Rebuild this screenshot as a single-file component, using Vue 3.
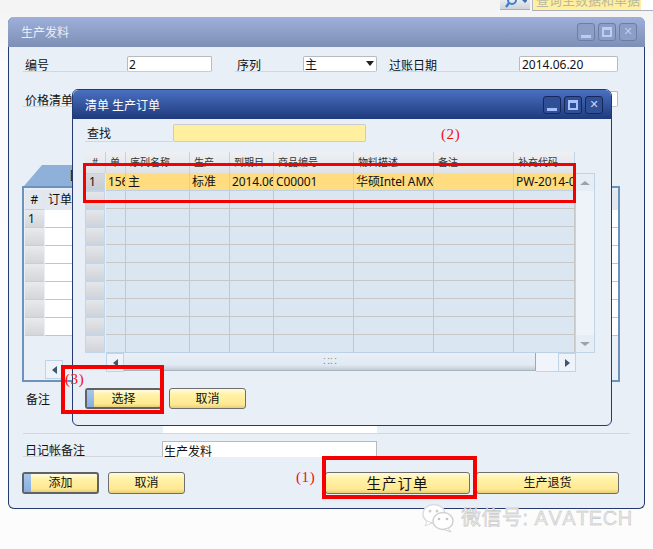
<script setup>
const dialogCols = [
  { w: 20, h: '单', c: '156' },
  { w: 64, h: '序列名称', c: '主' },
  { w: 40, h: '生产', c: '标准' },
  { w: 44, h: '到期日', c: '2014.06' },
  { w: 80, h: '商品编号', c: 'C00001' },
  { w: 80, h: '物料描述', c: '华硕Intel AMX' },
  { w: 80, h: '备注', c: '' },
  { w: 61, h: '补充代码', c: 'PW-2014-06' }
]
const dialogRows = Array.from({ length: 10 }, (_, i) => i)
const orderRows = Array.from({ length: 7 }, (_, i) => i)
</script>

<template>
  <div class="page">
    <div class="topbar">
      <div class="search-btn">
        <svg width="22" height="10" viewBox="0 0 22 10">
          <circle cx="7" cy="0" r="4" fill="none" stroke="#3f7fd0" stroke-width="2" />
          <path d="M4 3 L1 7" stroke="#3f7fd0" stroke-width="2.4" />
          <path d="M17 0 h6 l-3 3 z" fill="#3f6fa8" />
        </svg>
      </div>
      <div class="search-input"><span class="search-text">查询主数据和单据</span></div>
    </div>

    <section class="window main-window">
      <header class="title inactive">
        <span>生产发料</span>
        <div class="controls">
          <i class="ctl"><b class="min"></b></i>
          <i class="ctl"><b class="max"></b></i>
          <i class="ctl"><b class="close">✕</b></i>
        </div>
      </header>

      <div class="main-body">
        <div class="row row-one">
          <label class="lbl l-no">编号</label>
          <div class="field f-no">2</div>
          <label class="lbl l-series">序列</label>
          <div class="field f-series">主<span class="caret"></span></div>
          <label class="lbl l-date">过账日期</label>
          <div class="field f-date">2014.06.20</div>
        </div>
        <div class="row row-two">
          <label class="lbl l-price">价格清单</label>
          <div class="field f-price"></div>
        </div>

        <div class="tab"><span class="tab-text">[</span></div>
        <div class="frame">
          <div class="o-row o-head">
            <div class="o-num">#</div>
            <div class="o-cell o-headcell">订单</div>
          </div>
          <div v-for="r in orderRows" :key="r" class="o-row">
            <div class="o-num grey">{{ r === 0 ? '1' : '' }}</div>
            <div class="o-cell"></div>
          </div>
          <div class="o-scroll">
            <div class="arrow-btn"><span class="tri-left"></span></div>
          </div>
        </div>

        <div class="remark">
          <label>备注</label>
          <div class="remark-box"></div>
        </div>
        <div class="row row-journal">
          <label class="lbl l-journal">日记帐备注</label>
          <div class="field f-journal">生产发料</div>
        </div>
        <div class="actions">
          <button class="btn primary w-std"><i class="strip"></i>添加</button>
          <button class="btn w-std">取消</button>
          <button class="btn big">生产订单</button>
          <button class="btn wide">生产退货</button>
        </div>
      </div>
    </section>

    <section class="window dialog">
      <header class="title active">
        <span>清单 生产订单</span>
        <div class="controls dark">
          <i class="ctl"><b class="min"></b></i>
          <i class="ctl"><b class="max"></b></i>
          <i class="ctl"><b class="close">✕</b></i>
        </div>
      </header>
      <div class="dlg-body">
        <div class="find">
          <label>查找</label>
          <div class="find-input"></div>
        </div>
        <div class="grid-wrap">
          <div class="grid">
            <div class="g-row g-head">
              <div class="g-num">#</div>
              <div v-for="c in dialogCols" :key="c.h" class="g-hcell" :style="{ width: c.w + 'px' }">{{ c.h }}</div>
            </div>
            <div v-for="r in dialogRows" :key="r" class="g-row g-body" :class="{ selected: r === 0 }">
              <div class="g-num grey" :class="{ current: r === 0 }">{{ r === 0 ? '1' : '' }}</div>
              <div v-for="c in dialogCols" :key="c.h" class="g-cell" :style="{ width: c.w + 'px' }">{{ r === 0 ? c.c : '' }}</div>
            </div>
          </div>
          <div class="vscroll">
            <div class="v-btn"><span class="tri-up"></span></div>
            <div class="v-track"></div>
            <div class="v-btn"><span class="tri-down"></span></div>
          </div>
        </div>
        <div class="hscroll">
          <div class="arrow-btn"><span class="tri-left"></span></div>
          <div class="thumb"><span class="grip">∷∷</span></div>
          <div class="h-gap"></div>
          <div class="arrow-btn"><span class="tri-right"></span></div>
        </div>
        <div class="dlg-actions">
          <button class="btn primary w-std"><i class="strip"></i>选择</button>
          <button class="btn w-std">取消</button>
        </div>
      </div>
    </section>

    <div class="mark m-row"></div>
    <div class="mark m-select"></div>
    <div class="mark m-order"></div>
    <span class="note n1">(1)</span>
    <span class="note n2">(2)</span>
    <span class="note n3">(3)</span>

    <div class="watermark">
      <svg width="34" height="30" viewBox="0 0 34 30">
        <ellipse cx="12" cy="11" rx="11" ry="9.5" fill="#fff" stroke="#dcdcdc" stroke-width="1.4" />
        <path d="M5 18 L3 23 L10 20 Z" fill="#fff" stroke="#dcdcdc" />
        <ellipse cx="21" cy="18" rx="10" ry="8.5" fill="#fff" stroke="#d0d0d0" stroke-width="1.4" />
        <path d="M26 25 L29 29 L22 26.5 Z" fill="#fff" stroke="#d0d0d0" />
        <circle cx="8" cy="8" r="1.5" fill="#cfcfcf" />
        <circle cx="15" cy="8" r="1.5" fill="#cfcfcf" />
        <circle cx="17" cy="16" r="1.3" fill="#c4c4c4" />
        <circle cx="25" cy="16" r="1.3" fill="#c4c4c4" />
      </svg>
      <span class="wm-text">微信号: AVATECH</span>
    </div>
  </div>
</template>

<style scoped>
.page {
  position: relative;
  width: 653px;
  height: 549px;
  overflow: hidden;
  background: linear-gradient(#f3f3f3, #fbfbfb 12%, #fcfcfc);
  font-family: "Noto Sans", "Noto Sans CJK SC", sans-serif;
  font-size: 12px;
  color: #111;
}
.topbar {
  position: absolute;
  top: 0;
  left: 500px;
  right: 0;
  height: 11px;
  display: flex;
  gap: 2px;
}
.search-btn {
  width: 30px;
  height: 10px;
  padding-left: 5px;
  box-sizing: border-box;
  background: linear-gradient(#e8ebef, #cfd3d8);
  border-bottom: 1px solid #a9afb8;
  overflow: hidden;
}
.search-btn svg { display: block; }
.search-input {
  flex: 1;
  height: 10px;
  background: linear-gradient(90deg, #ffef9f 0, #ffef9f 108px, #fff 108px);
  border-left: 1px solid #b5b9c2;
  border-bottom: 1px solid #a9afb8;
  overflow: hidden;
  color: #b9b9a0;
  font-size: 13px;
  line-height: 10px;
  padding-left: 3px;
}
.search-text { position: relative; top: -5px; }

.window {
  position: absolute;
  box-sizing: border-box;
  background: #e8eff7;
  border-radius: 6px 7px 6px 6px;
}
.main-window {
  left: 8px;
  top: 17px;
  width: 637px;
  height: 492px;
  border: 1px solid #24396f;
  border-top: 0;
}
.dialog {
  left: 72px;
  top: 89px;
  width: 540px;
  height: 337px;
  border: 1px solid #24396f;
}
.title {
  height: 30px;
  display: flex;
  align-items: center;
  justify-content: space-between;
  border-radius: 6px 6px 0 0;
  color: #fff;
  padding-left: 12px;
}
.title.inactive {
  background: linear-gradient(#9eb0da, #7d8fb4);
  color: #e8edf7;
  margin: 0 -1px;
  padding-left: 13px;
}
.title.active {
  background: linear-gradient(#4a70c0, #1f3a7c);
  margin: 0;
  height: 29px;
  padding-left: 12px;
}
.controls {
  display: flex;
  gap: 3px;
  margin-right: 8px;
}
.ctl {
  position: relative;
  display: block;
  width: 18px;
  height: 18px;
  box-sizing: border-box;
  border: 1px solid #6c7ea6;
  border-radius: 3px;
  background: #8c9dc6;
}
.dark .ctl { border-color: #16275a; background: #2f4f97; }
.ctl b { position: absolute; display: block; font-weight: 700; }
.min { left: 3px; right: 3px; bottom: 2px; height: 3px; background: #bccdf2; }
.max { left: 3px; right: 3px; top: 3px; bottom: 3px; border: 2px solid #bccdf2; border-top-width: 3px; box-sizing: border-box; }
.close { inset: 0; text-align: center; line-height: 16px; font-size: 11px; color: #bccdf2; font-family: "DejaVu Sans", sans-serif; }
.dark .min, .dark .max { border-color: #a7c1ff; }
.dark .min { background: #a7c1ff; }
.dark .close { color: #c5d6ff; }

.main-body { padding: 9px 0 0 14px; }
.row { display: flex; align-items: flex-end; }
.lbl {
  display: block;
  height: 16px;
  line-height: 19px;
  box-sizing: border-box;
  border-bottom: 1px solid #d3d7dc;
  padding-left: 2px;
  white-space: nowrap;
}
.field {
  position: relative;
  height: 16px;
  box-sizing: border-box;
  background: #fff;
  border: 1px solid #b8babd;
  border-bottom: 1px solid #c9cbce;
  border-radius: 2px;
  line-height: 16px;
  padding-left: 1px;
  white-space: nowrap;
  overflow: hidden;
}
.row-one { height: 16px; }
.l-no { width: 104px; }
.f-no { width: 85px; }
.l-series { width: 68px; margin-left: 23px; }
.f-series { width: 74px; }
.caret {
  position: absolute;
  right: 2px;
  top: 4px;
  border: 4px solid transparent;
  border-top: 5px solid #222;
  border-bottom: 0;
}
.l-date { width: 132px; margin-left: 10px; }
.f-date { width: 99px; padding-left: 2px; }
.row-two { height: 16px; margin-top: 19px; }
.l-price { width: 60px; overflow: visible; }
.f-price { width: 99px; margin-left: 436px; }

.tab {
  width: 60px;
  height: 21px;
  margin: 58px 0 0 1px;
  background: #8fb0d9;
  clip-path: polygon(18px 0, 100% 0, 100% 100%, 0 100%);
}
.tab-text { display: block; margin-left: 46px; line-height: 20px; }
.frame {
  position: relative;
  width: 598px;
  height: 196px;
  box-sizing: border-box;
  margin-left: -1px;
  border: 2px solid #6d93bd;
  padding: 2px 0 0 1px;
  background: #e8eff7;
}
.o-row { display: flex; height: 18px; }
.o-head { height: 20px; background: #dfe5ec; }
.o-num {
  width: 19px;
  margin-right: 1px;
  box-sizing: border-box;
  text-align: center;
  line-height: 17px;
  border-bottom: 1px solid #bcd1e6;
}
.o-num.grey { background: linear-gradient(#e8eaed, #d3d6da); text-align: left; padding-left: 3px; }
.o-head .o-num { line-height: 20px; background: #e3e8ee; }
.o-cell { flex: 1; background: #fff; border-bottom: 1px solid #c8c6bc; }
.o-headcell { background: #e3e8ee; border-bottom: 0; line-height: 20px; padding-left: 3px; }
.o-scroll { display: flex; margin: 24px 0 0 20px; }

.arrow-btn {
  position: relative;
  flex: none;
  width: 18px;
  height: 19px;
  box-sizing: border-box;
  background: #eef3f9;
  border: 1px solid #c0d4e8;
  display: flex;
  align-items: center;
  justify-content: center;
}
.tri-left { border: 4px solid transparent; border-right: 5px solid #3f566e; border-left: 0; }
.tri-right { border: 4px solid transparent; border-left: 5px solid #3f566e; border-right: 0; }
.tri-up { border: 5px solid transparent; border-bottom: 4px solid #9aa3ad; border-top: 0; }
.tri-down { border: 5px solid transparent; border-top: 4px solid #9aa3ad; border-bottom: 0; }

.remark {
  display: flex;
  margin-top: 10px;
  width: 607px;
  height: 42px;
  box-sizing: border-box;
  border-bottom: 1px solid #d3d7dc;
  line-height: 16px;
}
.remark label { width: 140px; padding-left: 3px; box-sizing: border-box; }
.remark-box { width: 214px; height: 41px; background: #fff; }
.row-journal { margin-top: 7px; height: 16px; }
.l-journal { width: 139px; padding-left: 2px; }
.f-journal { width: 215px; padding-left: 1px; border-bottom: 0; border-radius: 0; line-height: 19px; }

.actions { display: flex; margin: 15px 0 0 -1px; height: 22px; }
.btn {
  position: relative;
  display: block;
  height: 22px;
  padding: 0;
  box-sizing: border-box;
  font: inherit;
  color: #111;
  border: 1px solid #6e6e6e;
  border-radius: 3px;
  background: linear-gradient(#fffbe2, #fff2a8 28%, #ffe992 80%, #e8cf7a);
  text-align: center;
  line-height: 20px;
  overflow: hidden;
}
.btn.primary { border: 2px solid #606266; line-height: 18px; }
.w-std { width: 77px; }
.actions .w-std + .w-std { margin-left: 9px; }
.big { width: 145px; margin-left: 140px; font-size: 14.5px; letter-spacing: 1px; }
.wide { width: 143px; margin-left: 6px; }
.strip {
  position: absolute;
  left: 0;
  top: 0;
  bottom: 0;
  width: 7px;
  background: linear-gradient(#a9c6ec, #84aee0);
}

.dlg-body { padding: 0 0 0 12px; }
.find { display: flex; height: 21px; margin-top: 5px; align-items: flex-start; }
.find label {
  width: 88px;
  height: 18px;
  line-height: 19px;
  padding-left: 2px;
  box-sizing: border-box;
  border-bottom: 1px solid #d3d7dc;
}
.find-input {
  width: 193px;
  height: 18px;
  box-sizing: border-box;
  background: #fff0a0;
  border: 1px solid #c9cbce;
  border-radius: 2px;
}
.grid-wrap { display: flex; margin-top: 7px; }
.grid { width: 490px; flex: none; }
.g-row { display: flex; }
.g-head { height: 21px; }
.g-body { height: 18px; }
.g-num {
  width: 20px;
  margin-right: 1px;
  flex: none;
  box-sizing: border-box;
  text-align: center;
}
.g-head .g-num {
  background: linear-gradient(#eef0f3, #dfe3e8);
  border-right: 1px solid #c3d3e4;
  font-size: 10px;
  color: #333;
  line-height: 20px;
  width: 21px;
  margin-right: 0;
}
.g-hcell {
  flex: none;
  box-sizing: border-box;
  background: linear-gradient(#eef0f3, #dfe3e8);
  border-right: 1px solid #c3d3e4;
  font-size: 10px;
  color: #333;
  line-height: 20px;
  padding-left: 4px;
  overflow: hidden;
  white-space: nowrap;
}
.g-num.grey {
  background: linear-gradient(#e4e6ea, #d0d3d8);
  border: 1px solid #c2d5e9;
  text-align: left;
  padding-left: 3px;
  line-height: 16px;
}
.g-num.current { background: linear-gradient(#d5d8de, #c8ccd3); }
.g-cell {
  flex: none;
  box-sizing: border-box;
  background: #dbe6f3;
  border-right: 1px solid #c6c7c6;
  border-bottom: 1px solid #c6c7c6;
  padding-left: 2px;
  line-height: 18px;
  white-space: nowrap;
  overflow: hidden;
  letter-spacing: -0.12px;
}
.selected .g-cell {
  background: #ffdc80;
  border-right-color: #bfd0e0;
  border-bottom-color: #bfd0e0;
}
.g-body:last-child .g-cell { border-bottom-color: #bcd1e6; }
.vscroll {
  width: 20px;
  margin-top: 21px;
  box-sizing: border-box;
  background: #eef3f9;
  border: 1px solid #c0d4e8;
  display: flex;
  flex-direction: column;
}
.v-btn { height: 17px; background: #e6edf5; display: flex; align-items: center; justify-content: center; }
.v-track { flex: 1; }
.hscroll {
  display: flex;
  height: 19px;
  margin: 0 0 0 21px;
  width: 470px;
}
.thumb {
  width: 412px;
  height: 18px;
  box-sizing: border-box;
  background: linear-gradient(#e8eff7, #e1e9f2 70%, #c3ccd6);
  border-right: 1px solid #9fa8b2;
  border-bottom: 1px solid #a9b3be;
  text-align: center;
  font-size: 8px;
  line-height: 16px;
  color: #7f8894;
  overflow: hidden;
}
.grip { letter-spacing: -1px; }
.h-gap { flex: 1; background: #f1f5fb; border-bottom: 1px solid #c0d4e8; }
.dlg-actions { display: flex; gap: 7px; margin: 16px 0 0 0; }
.dlg-actions .btn { height: 21px; line-height: 19px; }
.dlg-actions .btn.primary { line-height: 17px; }
.dlg-actions .w-std { width: 77px; }

.mark {
  position: absolute;
  box-sizing: border-box;
  border: 4px solid #f50000;
}
.m-row { left: 83px; top: 163px; width: 493px; height: 40px; border-width: 3px; }
.m-select { left: 61px; top: 365px; width: 103px; height: 49px; }
.m-order { left: 322px; top: 456px; width: 155px; height: 43px; }
.note {
  position: absolute;
  color: #f01010;
  font-family: "Liberation Serif", serif;
  font-size: 15px;
  line-height: 16px;
  letter-spacing: 0.6px;
}
.n1 { left: 296px; top: 469px; }
.n2 { left: 441px; top: 126px; }
.n3 { left: 65px; top: 371px; }

.watermark {
  position: absolute;
  left: 422px;
  top: 503px;
  display: flex;
  align-items: center;
  gap: 5px;
}
.wm-text {
  font-family: "Liberation Sans", "Noto Sans CJK SC", sans-serif;
  font-size: 20px;
  font-kerning: none;
  color: #e6e6e6;
  -webkit-text-stroke: 0.35px #b8b8b8;
  letter-spacing: 0.5px;
  line-height: 24px;
  white-space: nowrap;
}
</style>

<style>
html, body { margin: 0; background: #fbfbfb; }
</style>
